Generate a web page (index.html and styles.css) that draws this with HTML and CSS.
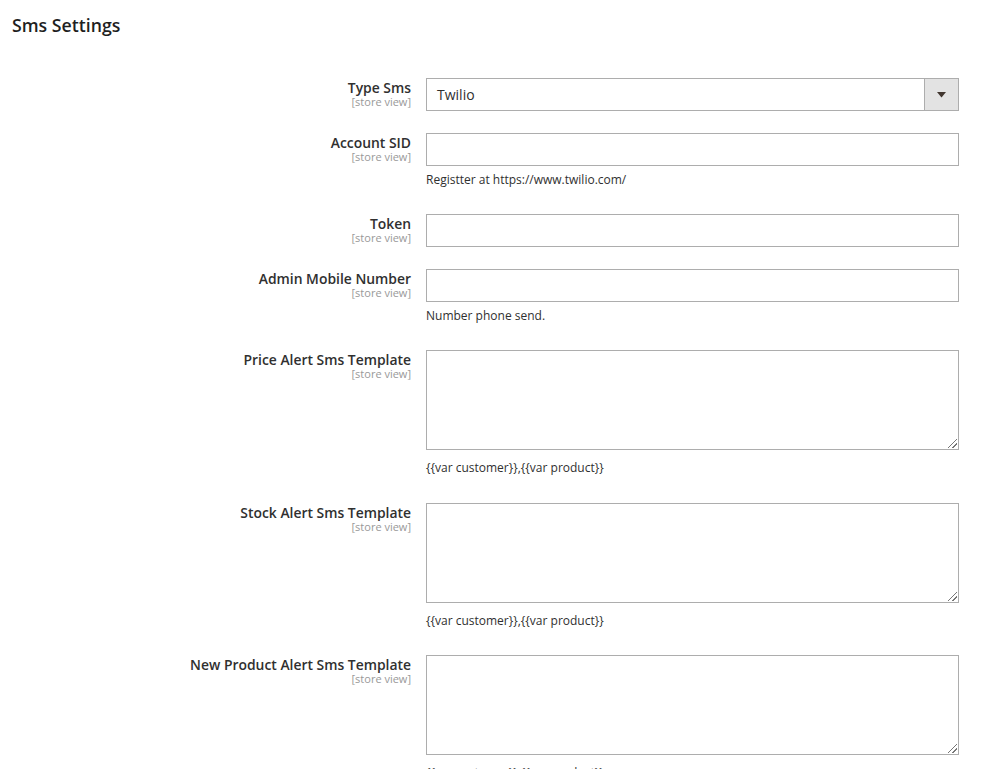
FILE: index.html
```html
<!DOCTYPE html>
<html>
<head>
<meta charset="utf-8">
<link rel="stylesheet" href="styles.css">
</head>
<body>
<div class="page">
  <h2 class="section-title">Sms Settings</h2>
  <div class="form">
    <div class="row">
      <div class="label"><span class="label-text">Type Sms</span><span class="scope">[store view]</span></div>
      <div class="control">
        <div class="select"><span class="select-value">Twilio</span><span class="select-btn"><svg width="9" height="6" viewBox="0 0 9 6"><path d="M0 0h9L4.5 5.5z" fill="#41362f"/></svg></span></div>
      </div>
    </div>
    <div class="row">
      <div class="label"><span class="label-text">Account SID</span><span class="scope">[store view]</span></div>
      <div class="control">
        <div class="input"></div>
        <p class="note">Registter at https://www.twilio.com/</p>
      </div>
    </div>
    <div class="row">
      <div class="label"><span class="label-text">Token</span><span class="scope">[store view]</span></div>
      <div class="control">
        <div class="input"></div>
      </div>
    </div>
    <div class="row">
      <div class="label"><span class="label-text">Admin Mobile Number</span><span class="scope">[store view]</span></div>
      <div class="control">
        <div class="input"></div>
        <p class="note">Number phone send.</p>
      </div>
    </div>
    <div class="row">
      <div class="label"><span class="label-text">Price Alert Sms Template</span><span class="scope">[store view]</span></div>
      <div class="control">
        <div class="textarea"><span class="grip"></span></div>
        <p class="note note-ta">{{var customer}},{{var product}}</p>
      </div>
    </div>
    <div class="row">
      <div class="label"><span class="label-text">Stock Alert Sms Template</span><span class="scope">[store view]</span></div>
      <div class="control">
        <div class="textarea"><span class="grip"></span></div>
        <p class="note note-ta">{{var customer}},{{var product}}</p>
      </div>
    </div>
    <div class="row">
      <div class="label"><span class="label-text">New Product Alert Sms Template</span><span class="scope">[store view]</span></div>
      <div class="control">
        <div class="textarea"><span class="grip"></span></div>
        <p class="note note-ta">{{var customer}},{{var product}}</p>
      </div>
    </div>
  </div>
</div>
</body>
</html>
```
FILE: styles.css
```css
html, body {
  margin: 0;
  padding: 0;
  background: #fff;
}
body {
  font-family: "Open Sans", "Liberation Sans", sans-serif;
  color: #303030;
}
.page {
  padding: 14px 0 0 12px;
}
.section-title {
  margin: 0;
  font-size: 17.7px;
  font-weight: 600;
  line-height: 22px;
  color: #1f1f1f;
}
.form {
  margin-top: 42px;
}
.row {
  display: grid;
  grid-template-columns: 399px 533px;
  column-gap: 15px;
  margin-bottom: 22px;
}
.label {
  display: flex;
  flex-direction: column;
  align-items: flex-end;
  text-align: right;
  padding-top: 2px;
}
.label-text {
  font-size: 13.9px;
  font-weight: 600;
  line-height: 16px;
  color: #303030;
}
.scope {
  font-size: 11px;
  line-height: 12px;
  color: #999;
}
.control {
  display: flex;
  flex-direction: column;
}
.select, .input {
  box-sizing: border-box;
  height: 33px;
  border: 1px solid #adadad;
  background: #fff;
}
.select {
  display: flex;
  align-items: center;
}
.select-value {
  flex: 1;
  padding-left: 10px;
  font-size: 14px;
  color: #303030;
}
.select-btn {
  align-self: stretch;
  width: 33px;
  border-left: 1px solid #adadad;
  background: #e3e3e3;
  display: flex;
  align-items: center;
  justify-content: center;
}
.textarea {
  box-sizing: border-box;
  height: 100px;
  border: 1px solid #adadad;
  background: #fff;
  position: relative;
}
.grip {
  position: absolute;
  right: 1px;
  bottom: 1px;
  width: 9px;
  height: 9px;
  background: linear-gradient(135deg, transparent 45%, #777 45%, #777 52%, transparent 52%, transparent 72%, #777 72%, #777 79%, transparent 79%);
}
.note {
  margin: 4px 0 3px;
  font-size: 12px;
  line-height: 19px;
  color: #303030;
}
.note-ta {
  margin-top: 8px;
  margin-bottom: 3.6px;
}
```
